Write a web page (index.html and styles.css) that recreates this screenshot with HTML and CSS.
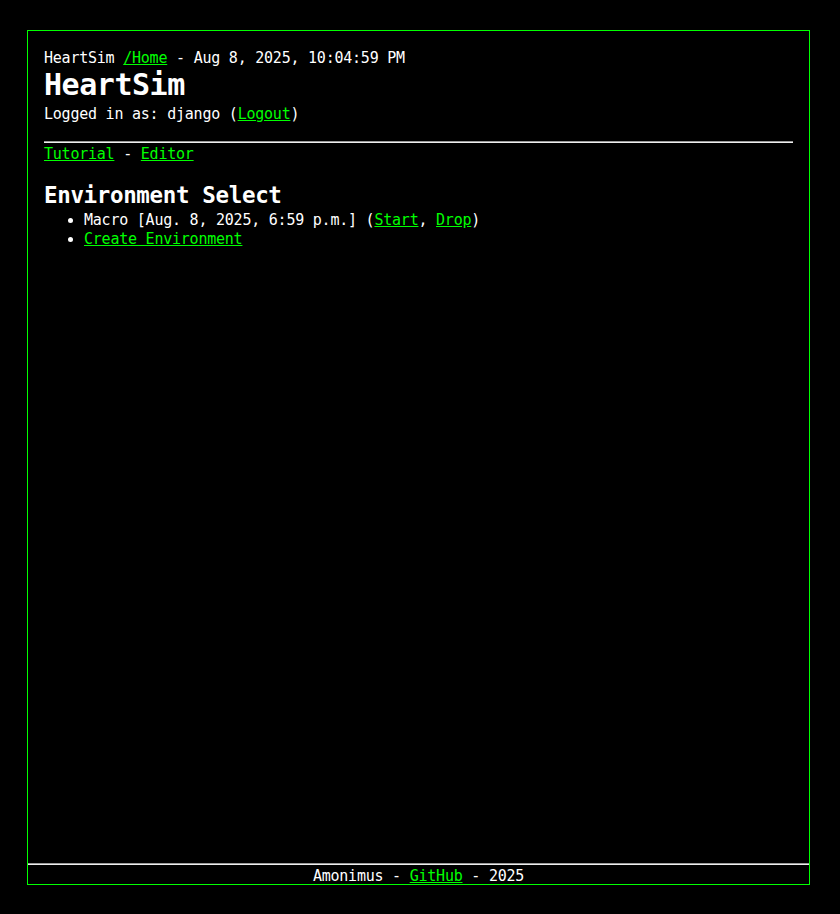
FILE: index.html
```html
<!DOCTYPE html>
<html>
<head>
<meta charset="utf-8">
<title>HeartSim</title>
<link rel="stylesheet" href="styles.css">
</head>
<body>
<div class="frame">
  <main class="content">
    <div class="line">HeartSim <a href="#">/Home</a> - Aug 8, 2025, 10:04:59 PM</div>
    <h1 class="title">HeartSim</h1>
    <div class="line">Logged in as: django (<a href="#">Logout</a>)</div>
    <hr class="rule top-rule">
    <nav class="line">
      <a href="#">Tutorial</a> - <a href="#">Editor</a>
    </nav>
    <h2 class="section">Environment Select</h2>
    <ul class="envs">
      <li class="line">Macro [Aug. 8, 2025, 6:59 p.m.] (<a href="#">Start</a>, <a href="#">Drop</a>)</li>
      <li class="line"><a href="#">Create Environment</a></li>
    </ul>
  </main>
  <footer class="footer">
    <hr class="rule">
    <div class="line footer-text">Amonimus - <a href="#">GitHub</a> - 2025</div>
  </footer>
</div>
</body>
</html>
```
FILE: styles.css
```css
html, body {
  background: #000;
}
body {
  margin: 0;
  padding: 30px 30px 0 27px;
  color: #fff;
  font-family: "DejaVu Sans Mono", monospace;
  font-size: 15px;
  letter-spacing: -0.23px;
  line-height: 19px;
}
a {
  color: #00ff00;
  text-decoration: underline;
}
.frame {
  box-sizing: border-box;
  height: 855px;
  border: 1px solid #00ff00;
  display: flex;
  flex-direction: column;
}
.content {
  flex: 1;
  padding: 16px 16px 0 16px;
}
.line {
  padding-top: 4px;
  line-height: 15px;
}
.title {
  margin: 0;
  font-size: 30px;
  line-height: 37px;
  letter-spacing: -0.46px;
  font-weight: bold;
}
.rule {
  margin: 0;
  height: 0;
  border: 0;
  border-top: 1px solid #9a9a9a;
  border-bottom: 1px solid #eeeeee;
}
.top-rule {
  margin-top: 19px;
}
.section {
  margin: 19px 0 0 0;
  font-size: 22.5px;
  line-height: 28px;
  letter-spacing: -0.35px;
  font-weight: bold;
}
.envs {
  margin: 0;
  padding-left: 40px;
}
.footer-text {
  text-align: center;
}
```
